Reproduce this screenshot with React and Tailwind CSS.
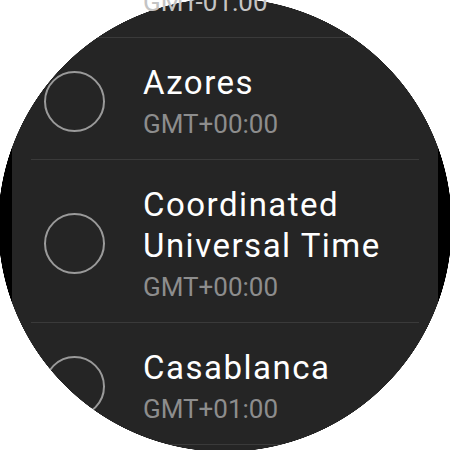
import React from "react";

const items = [
  { lines: ["Azores"], sub: "GMT-01:00", top: true },
  { lines: ["Azores"], sub: "GMT+00:00" },
  { lines: ["Coordinated", "Universal Time"], sub: "GMT+00:00" },
  { lines: ["Casablanca"], sub: "GMT+01:00" },
  { lines: ["Canary Islands"], sub: "GMT+01:00" },
];

function Item({ item }) {
  return (
    <div className="flex items-center pt-[24px] pb-[19px]">
      <div className="ml-[32px] w-[61px] h-[61px] shrink-0 rounded-full border-2 border-[#9a9a9a]" />
      <div className="ml-[38px] flex flex-col">
        {item.lines.map((l) => (
          <div key={l} className={"text-[33px] leading-[41px] tracking-[1.5px] text-white whitespace-nowrap " + (item.top ? "invisible" : "")}>
            {l}
          </div>
        ))}
        <div className={"mt-[5px] text-[26px] leading-[32px] whitespace-nowrap " + (item.top ? "relative z-20 text-[#c4c4c4]" : "text-[#8d8d8d]")}>
          {item.sub}
        </div>
      </div>
    </div>
  );
}

export default function App() {
  return (
    <div
      className="relative w-[450px] h-[450px] overflow-hidden bg-black"
      style={{ fontFamily: "Roboto, 'Noto Sans', sans-serif" }}
    >
      <div className="mx-[12px] h-full bg-[#252525] flex flex-col">
        <div className="flex flex-col mt-[-84px]">
          {items.map((it, i) => (
            <React.Fragment key={i}>
              {i > 0 && <div className="mx-[19px] h-px bg-[#3a3a3a]" />}
              <Item item={it} />
            </React.Fragment>
          ))}
        </div>
      </div>
      <div className="pointer-events-none absolute inset-0 z-10 bg-[radial-gradient(circle_at_center,transparent_226.5px,white_227px)]" />
    </div>
  );
}
